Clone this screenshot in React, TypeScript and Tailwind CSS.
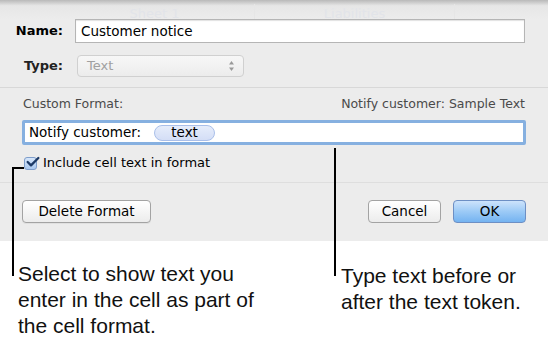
import { Check } from "lucide-react";

const ui = "font-['DejaVu_Sans',_'Liberation_Sans',_sans-serif]";
const callout = "font-['Liberation_Sans',_Arial,_sans-serif]";

function Stepper() {
  return (
    <svg width="7" height="12" viewBox="0 0 7 12" className="text-[#9a9a9a]">
      <path d="M3.5 1 L6 4.5 H1 Z" fill="currentColor" />
      <path d="M3.5 11 L6 7.5 H1 Z" fill="currentColor" />
    </svg>
  );
}

export default function App() {
  return (
    <div className={`relative w-[548px] h-[344px] overflow-hidden bg-white ${ui}`}>
      <div className="h-[241px] bg-[#ececec]">
        {/* faded sheet tabs behind the sheet */}
        <div className="relative h-[19px] bg-gradient-to-b from-[#b9b9b9] via-[#e6e6e6] via-[30%] to-[#ececec]">
          <div className="absolute left-[55px] right-[38px] top-[4px] bottom-0 flex text-[13px] text-[#e2e4e9]">
            <div className="flex-1 text-center border-r border-[#e6e6e6]">Sheet 1</div>
            <div className="flex-1 text-center border-r border-[#e6e6e6]">Liabilities</div>
            <div className="w-[55px]" />
          </div>
        </div>

        <div className="flex items-center h-[24px]">
          <div className="w-[63px] text-right text-[13px] font-bold text-black">Name:</div>
          <div className="ml-[12px] w-[450px] h-[24px] bg-white border border-[#b5b5b5] shadow-[inset_0_1px_1px_rgba(0,0,0,0.12)] flex items-center px-[5px] text-[13.5px] text-black">
            Customer notice
          </div>
        </div>

        <div className="flex items-center h-[22px] mt-[12px]">
          <div className="w-[63px] text-right text-[13px] font-bold text-[#222]">Type:</div>
          <div className="ml-[14px] w-[167px] h-[22px] rounded-[4px] border border-[#d0d0d0] bg-gradient-to-b from-[#f7f7f7] to-[#ececec] flex items-center justify-between pl-[9px] pr-[8px] text-[13px] text-[#a0a0a0]">
            Text
            <Stepper />
          </div>
        </div>

        <div className="mt-[10px] border-t border-[#d8d8d8]" />

        <div className="flex justify-between items-center h-[14px] mt-[9px] px-[23px] text-[12.5px] text-[#4a4a4a]">
          <span>Custom Format:</span>
          <span>Notify customer: Sample Text</span>
        </div>

        <div className="mx-[22px] mt-[9px] h-[25px] rounded-[2px] border-[3px] border-[#86b0e0] bg-white flex items-center pl-[4px] text-[13.5px] text-black">
          <span>Notify customer:</span>
          <span className="ml-[13px] w-[61px] h-[16px] rounded-full border border-[#a9bfea] bg-gradient-to-b from-[#e6edfb] to-[#d4def6] flex items-center justify-center">
            text
          </span>
        </div>

        <div className="flex items-center mt-[11px] ml-[24px] h-[14px]">
          <div className="relative w-[13px] h-[13px] rounded-[3px] border border-[#7f9ecb] bg-gradient-to-b from-[#d6e6fa] to-[#a9c8ef]">
            <Check className="absolute -top-[4px] left-0 text-[#1d3a66]" size={16} strokeWidth={3.5} />
          </div>
          <span className="ml-[6px] text-[13px] text-black">Include cell text in format</span>
        </div>

        <div className="mt-[12px] border-t border-[#dedede]" />

        <div className="flex items-center mt-[17px] px-[22px]">
          <button className="w-[129px] h-[23px] rounded-[4px] border border-[#a3a3a3] bg-gradient-to-b from-white to-[#ececec] text-[13.5px] text-black shadow-[0_1px_0_rgba(0,0,0,0.05)]">
            Delete Format
          </button>
          <div className="flex-1" />
          <button className="w-[73px] h-[23px] rounded-[4px] border border-[#a3a3a3] bg-gradient-to-b from-white to-[#ececec] text-[13.5px] text-black">
            Cancel
          </button>
          <button className="ml-[12px] w-[73px] h-[23px] rounded-[4px] border border-[#6d8fc4] bg-gradient-to-b from-[#cde3fb] via-[#9ccaf6] to-[#74b3f1] text-[13.5px] text-black">
            OK
          </button>
        </div>
      </div>

      {/* callout text */}
      <div className={`flex mt-[20px] text-[21px] leading-[26px] text-[#111] ${callout}`}>
        <p className="ml-[18px] w-[260px]">
          Select to show text you
          <br />
          enter in the cell as part of
          <br />
          the cell format.
        </p>
        <p className="ml-[63px] mt-[2px] whitespace-nowrap">
          Type text before or
          <br />
          after the text token.
        </p>
      </div>

      {/* callout lines */}
      <div className="absolute left-[12px] top-[167px] w-[12px] h-[2px] bg-black" />
      <div className="absolute left-[12px] top-[167px] w-[2px] h-[109px] bg-black" />
      <div className="absolute left-[334px] top-[148px] w-[2px] h-[128px] bg-black" />
    </div>
  );
}
